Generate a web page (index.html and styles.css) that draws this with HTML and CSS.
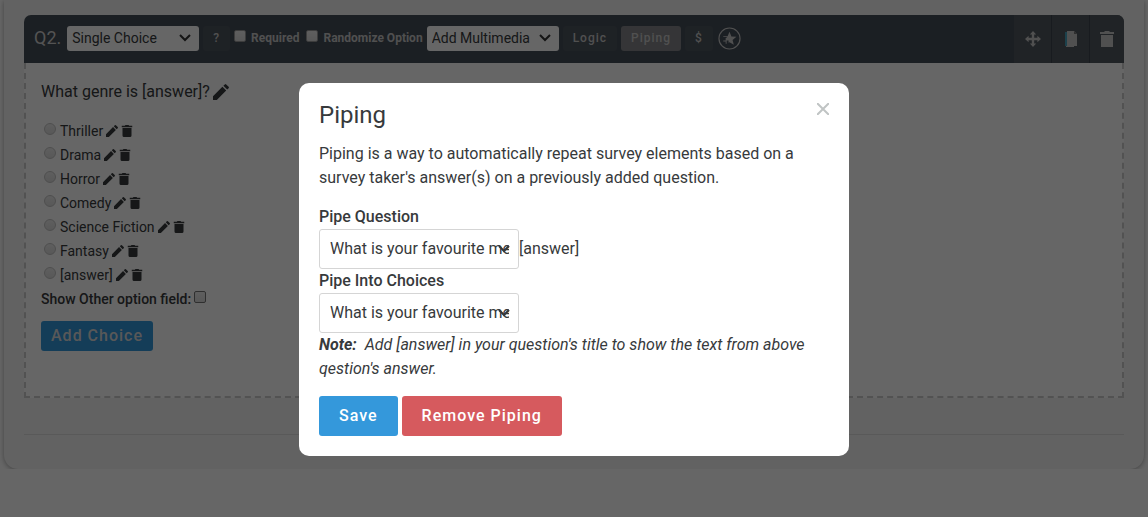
FILE: index.html
```html
<!DOCTYPE html>
<html lang="en">
<head>
<meta charset="utf-8">
<title>Survey editor - Piping</title>
<meta name="viewport" content="width=device-width, initial-scale=1">
<link rel="stylesheet" href="styles.css">
</head>
<body>
<svg class="sprite" aria-hidden="true">
  <symbol id="pencil" viewBox="0 0 16 16"><path d="M0 12.200 9.400 2.800l3.800 3.800L3.800 16H0zM10.400 1.800 11.800.4q.7-.7 1.400 0l2.400 2.400q.7.7 0 1.400l-1.400 1.400z"/></symbol>
  <symbol id="trash" viewBox="0 0 14 16"><path d="M0 1h4l1-1h4l1 1h4v2H0zM1 4h12v10q0 2-2 2H3q-2 0-2-2z"/></symbol>
</svg>
<main class="survey">
  <section class="question">
    <header class="bar">
      <span class="number">Q2.</span>
      <select class="pick" aria-label="Question type"><option>Single Choice</option></select>
      <button class="chip" type="button" aria-label="Help">?</button>
      <label class="flag"><input class="check" type="checkbox">Required</label>
      <label class="flag"><input class="check" type="checkbox">Randomize Option</label>
      <select class="pick" aria-label="Multimedia"><option>Add Multimedia</option></select>
      <button class="chip" type="button">Logic</button>
      <button class="chip active" type="button">Piping</button>
      <button class="chip" type="button">$</button>
      <button class="star" type="button" aria-label="Favourite">
        <svg viewBox="0 0 24 24"><circle cx="12" cy="12" r="11" fill="none" stroke="currentColor" stroke-width="1.2"/><path fill="currentColor" d="m12 5 2 4.800 5.200.4-4 3.300 1.300 5-4.500-2.700-1 .7V14H9v3.500H8V15H5.500v-1H8v-2.500h1v-1H5.500V9.700H10z"/></svg>
      </button>
      <div class="tools">
        <button class="tool" type="button" aria-label="Move"><svg viewBox="0 0 16 16"><path d="m8 0 3.200 3.600H9.200v3.200h3.200V4.800L16 8l-3.600 3.200V9.200H9.200v3.200h2L8 16l-3.200-3.600h2V9.200H3.600v2L0 8l3.600-3.200v2h3.200V3.600h-2z"/></svg></button>
        <button class="tool" type="button" aria-label="Copy"><svg viewBox="0 0 16 16"><path class="tint" d="M2 1h2v14H2z"/><path d="M4 0h7l3 3v12H4zM3 15h8v1H3z"/><path class="fold" d="M11 0v3h3"/></svg></button>
        <button class="tool" type="button" aria-label="Delete"><svg viewBox="0 0 16 16"><path d="M1 1h4l1-1h4l1 1h4v2H1zM2 4h12v12H2z"/></svg></button>
      </div>
    </header>
    <div class="body">
      <h2 class="title">What genre is [answer]?<button class="icon large" type="button" aria-label="Edit question"><svg><use href="#pencil"/></svg></button></h2>
      <ul class="choices">
        <li><label><input class="radio" type="radio" name="genre">Thriller</label><button class="icon" type="button" aria-label="Edit"><svg><use href="#pencil"/></svg></button><button class="icon" type="button" aria-label="Delete"><svg><use href="#trash"/></svg></button></li>
        <li><label><input class="radio" type="radio" name="genre">Drama</label><button class="icon" type="button" aria-label="Edit"><svg><use href="#pencil"/></svg></button><button class="icon" type="button" aria-label="Delete"><svg><use href="#trash"/></svg></button></li>
        <li><label><input class="radio" type="radio" name="genre">Horror</label><button class="icon" type="button" aria-label="Edit"><svg><use href="#pencil"/></svg></button><button class="icon" type="button" aria-label="Delete"><svg><use href="#trash"/></svg></button></li>
        <li><label><input class="radio" type="radio" name="genre">Comedy</label><button class="icon" type="button" aria-label="Edit"><svg><use href="#pencil"/></svg></button><button class="icon" type="button" aria-label="Delete"><svg><use href="#trash"/></svg></button></li>
        <li><label><input class="radio" type="radio" name="genre">Science Fiction</label><button class="icon" type="button" aria-label="Edit"><svg><use href="#pencil"/></svg></button><button class="icon" type="button" aria-label="Delete"><svg><use href="#trash"/></svg></button></li>
        <li><label><input class="radio" type="radio" name="genre">Fantasy</label><button class="icon" type="button" aria-label="Edit"><svg><use href="#pencil"/></svg></button><button class="icon" type="button" aria-label="Delete"><svg><use href="#trash"/></svg></button></li>
        <li><label><input class="radio" type="radio" name="genre">[answer]</label><button class="icon" type="button" aria-label="Edit"><svg><use href="#pencil"/></svg></button><button class="icon" type="button" aria-label="Delete"><svg><use href="#trash"/></svg></button></li>
      </ul>
      <label class="other">Show Other option field:<input class="check" type="checkbox"></label>
      <button class="btn small" type="button">Add Choice</button>
    </div>
  </section>
  <hr class="rule">
</main>
<div class="overlay">
  <div class="modal" role="dialog" aria-modal="true" aria-labelledby="piping-title">
    <div class="modal-head">
      <h1 class="modal-title" id="piping-title">Piping</h1>
      <button class="close" type="button" aria-label="Close"><svg viewBox="0 0 12 12"><path d="m0 0 12 12M12 0 0 12"/></svg></button>
    </div>
    <p class="intro">Piping is a way to automatically repeat survey elements based on a survey taker's answer(s) on a previously added question.</p>
    <label class="label" for="pipe-question">Pipe Question</label>
    <div class="row"><select class="field" id="pipe-question"><option>What is your favourite medium?</option></select><span>[answer]</span></div>
    <label class="label" for="pipe-choices">Pipe Into Choices</label>
    <div class="row"><select class="field" id="pipe-choices"><option>What is your favourite medium?</option></select></div>
    <p class="note"><b>Note:</b> Add [answer] in your question's title to show the text from above qestion's answer.</p>
    <div class="actions">
      <button class="btn" type="button">Save</button>
      <button class="btn danger" type="button">Remove Piping</button>
    </div>
  </div>
</div>
</body>
</html>
```
FILE: styles.css
```css
* { box-sizing: border-box; }
body {
  margin: 0;
  background: #fff;
  color: #373a3c;
  font: 16px/24px Roboto, "Liberation Sans", sans-serif;
}
button, select, input { font: inherit; margin: 0; }
button { border: 0; padding: 0; background: none; color: inherit; }
h1, h2, p, ul { margin: 0; padding: 0; font-weight: 400; }
.sprite { display: none; }
svg { display: block; fill: currentColor; }

.survey {
  margin: 0 4px;
  padding: 15px 20px 34px;
  background: #f4f4f4;
  border-radius: 0 0 14px 14px;
  box-shadow: 0 1px 5px rgba(0, 0, 0, .35);
}
.bar {
  display: flex;
  align-items: center;
  gap: 4px;
  height: 48px;
  padding: 0 0 2px 10px;
  background: #454e58;
  color: #c8c8c8;
  border-radius: 7px 7px 0 0;
  overflow: hidden;
}
.number { margin-right: 2px; font-size: 18px; color: #d0d0d0; }
.pick {
  appearance: none;
  width: 132px;
  height: 25px;
  padding: 0 5px;
  border: 0;
  border-radius: 3px;
  font-size: 14px;
  color: #373a3c;
  background: #fff url("data:image/svg+xml,%3Csvg xmlns='http://www.w3.org/2000/svg' viewBox='0 0 12 8'%3E%3Cpath d='m1 1 5 5 5-5' fill='none' stroke='%23333' stroke-width='2'/%3E%3C/svg%3E") no-repeat right 8px center / 12px 8px;
}
.chip {
  height: 25px;
  padding: 0 10px;
  border-radius: 3px;
  background: #4d555d;
  font-size: 12px;
  font-weight: 500;
  letter-spacing: 1px;
}
.chip.active { background: #848689; }
.flag {
  display: flex;
  gap: 5px;
  margin-right: 3px;
  font-size: 12px;
  font-weight: 700;
}
.flag + .pick { margin-left: -3px; }
.check, .radio {
  appearance: none;
  flex: none;
  width: 12px;
  height: 12px;
  border: 1px solid #999;
  border-radius: 2px;
  background: linear-gradient(#ececec, #dcdcdc);
}
.flag .check { margin-top: 4px; }
.star { width: 23px; margin-left: 1px; }
.tools { display: flex; align-self: stretch; margin: 0 0 -2px auto; }
.tool {
  display: grid;
  place-items: center;
  width: 38px;
  background: #50575f;
  border-right: 1px solid #3d454e;
}
.tool:last-child { width: 34px; border: 0; }
.tool svg { width: 16px; height: 16px; }
.tint { fill: #47a3bd; }
.fold { fill: #777; }

.body {
  padding: 16px 15px 45px;
  background: #fff;
  border: 2px dashed #ccc;
  border-top: 0;
}
.title { display: flex; align-items: center; gap: 3px; font-size: 16px; line-height: 26px; }
.icon svg { width: 12px; height: 12px; }
.icon.large svg { width: 16px; height: 16px; }
.choices { list-style: none; margin-top: 14px; font-size: 14px; }
.choices li { display: flex; align-items: center; gap: 3px; }
.choices label { display: flex; gap: 4px; }
.radio { margin: 4px 0 0 3px; border-radius: 50%; border-color: #c4c4c4; }
.other { display: flex; gap: 3px; font-size: 14px; font-weight: 500; }
.other .check { margin-top: 4px; border-color: #777; }
.rule { margin: 36px 0 0; border: 0; border-top: 1px solid #dfdfdf; }

.btn {
  height: 40px;
  padding: 0 20px;
  border-radius: 3px;
  background: #3498db;
  color: #fff;
  font-weight: 500;
  letter-spacing: 1px;
}
.btn.small { height: 30px; margin-top: 10px; padding: 0 10px; display: block; color: #ddd; }
.btn.danger { background: #d65a5e; }

.overlay {
  position: fixed;
  inset: 0;
  display: flex;
  justify-content: center;
  align-items: flex-start;
  padding: 83px 20px 20px;
  background: rgba(0, 0, 0, .6);
}
.modal {
  width: 100%;
  max-width: 550px;
  padding: 20px;
  background: #fff;
  border-radius: 10px;
}
.modal-head { display: flex; justify-content: space-between; align-items: flex-start; }
.modal-title { font-size: 24px; }
.close { width: 12px; height: 12px; color: #c0c4c4; }
.close svg { stroke: currentColor; stroke-width: 2; }
.intro { margin: 15px 0; }
.label { display: block; font-weight: 500; }
.row { display: flex; align-items: center; }
.field {
  appearance: none;
  width: 200px;
  height: 40px;
  padding: 0 9px 0 10px;
  border: 1px solid #d5d5d5;
  border-radius: 3px;
  color: #373a3c;
  background: #fff url("data:image/svg+xml,%3Csvg xmlns='http://www.w3.org/2000/svg' viewBox='0 0 12 8'%3E%3Cpath d='m1 1 5 5 5-5' fill='none' stroke='%23333' stroke-width='2'/%3E%3C/svg%3E") no-repeat right 8px center / 12px 8px;
}
.note { font-style: italic; }
.note b { margin-right: 4px; font-weight: 700; }
.actions { display: flex; gap: 4px; margin-top: 15px; }
```
